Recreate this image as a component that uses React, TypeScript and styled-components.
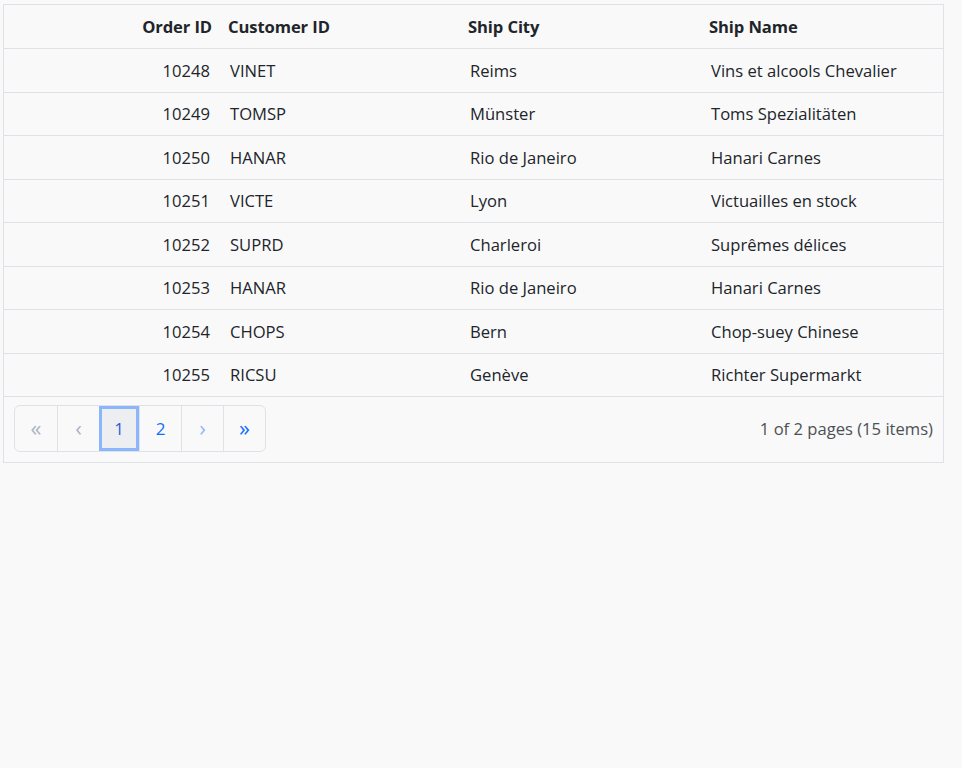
import React from "react";
import styled, { createGlobalStyle } from "styled-components";

const Global = createGlobalStyle`
  html, body { margin: 0; padding: 0; background: #f9f9fa; }
  body { font-family: "Open Sans", "Noto Sans", sans-serif; color: #212529; }
`;

const Page = styled.div`
  padding: 4px 18px 0 3px;
  min-height: 764px;
  box-sizing: border-box;
`;

const Grid = styled.div`
  border: 1px solid #dee2e6;
  width: 941px;
  box-sizing: border-box;
`;

const Table = styled.table`
  width: 100%;
  border-collapse: collapse;
  font-size: 16.6px;
  table-layout: fixed;
`;

const Col = styled.col<{ $w?: number }>`
  width: ${(p) => (p.$w ? p.$w + "px" : "auto")};
`;

const Th = styled.th<{ $align?: string }>`
  height: 43px;
  padding: 0 8px;
  text-align: ${(p) => p.$align || "left"};
  font-weight: 700;
  border-bottom: 1px solid #dee2e6;
  white-space: nowrap;
  letter-spacing: -0.1px;
`;

const Td = styled.td<{ $align?: string }>`
  height: 42.5px;
  padding: 0 10px;
  text-align: ${(p) => p.$align || "left"};
  border-bottom: 1px solid #dee2e6;
  white-space: nowrap;
`;

const Footer = styled.div`
  display: flex;
  align-items: center;
  justify-content: space-between;
  padding: 8px 10px 10px 10px;
`;

const Pager = styled.div`
  display: flex;
  border: 1px solid #dee2e6;
  border-radius: 6px;
`;

const PageBtn = styled.button<{ $state: "disabled" | "active" | "normal" | "light"; $arrow?: boolean }>`
  width: 42px;
  height: 45px;
  box-sizing: border-box;
  font-family: inherit;
  font-size: ${(p) => (p.$arrow ? "22px" : "17px")};
  line-height: 1;
  display: flex;
  align-items: center;
  justify-content: center;
  background: ${(p) => (p.$state === "active" ? "#eceef1" : "transparent")};
  border: none;
  border-left: 1px solid #dee2e6;
  padding: 0 0 3px 0;
  color: ${(p) =>
    p.$state === "disabled" ? "#aab4c3" : p.$state === "light" ? "#8fb8f7" : "#0d6efd"};
  ${(p) =>
    p.$state === "active"
      ? "outline: 3px solid #8bb6fb; outline-offset: -3px; color: #2b5fd9; border-left: none; width: 40px; padding: 0;"
      : ""}
  ${(p) => (p.$state === "normal" && !p.$arrow ? "padding: 0;" : "")}
  &:first-child { border-left: none; border-radius: 6px 0 0 6px; }
`;

const Summary = styled.div`
  font-size: 16.6px;
  color: #4d5154;
`;

const rows = [
  ["10248", "VINET", "Reims", "Vins et alcools Chevalier"],
  ["10249", "TOMSP", "Münster", "Toms Spezialitäten"],
  ["10250", "HANAR", "Rio de Janeiro", "Hanari Carnes"],
  ["10251", "VICTE", "Lyon", "Victuailles en stock"],
  ["10252", "SUPRD", "Charleroi", "Suprêmes délices"],
  ["10253", "HANAR", "Rio de Janeiro", "Hanari Carnes"],
  ["10254", "CHOPS", "Bern", "Chop-suey Chinese"],
  ["10255", "RICSU", "Genève", "Richter Supermarkt"],
];

export default function App() {
  return (
    <Page>
      <Global />
      <Grid>
        <Table>
          <colgroup>
            <Col $w={216} />
            <Col $w={240} />
            <Col $w={241} />
            <Col />
          </colgroup>
          <thead>
            <tr>
              <Th $align="right">Order ID</Th>
              <Th>Customer ID</Th>
              <Th>Ship City</Th>
              <Th>Ship Name</Th>
            </tr>
          </thead>
          <tbody>
            {rows.map((r) => (
              <tr key={r[0]}>
                <Td $align="right">{r[0]}</Td>
                <Td>{r[1]}</Td>
                <Td>{r[2]}</Td>
                <Td>{r[3]}</Td>
              </tr>
            ))}
          </tbody>
        </Table>
        <Footer>
          <Pager>
            <PageBtn $state="disabled" $arrow>«</PageBtn>
            <PageBtn $state="disabled" $arrow>‹</PageBtn>
            <PageBtn $state="active">1</PageBtn>
            <PageBtn $state="normal">2</PageBtn>
            <PageBtn $state="light" $arrow>›</PageBtn>
            <PageBtn $state="normal" $arrow>»</PageBtn>
          </Pager>
          <Summary>1 of 2 pages (15 items)</Summary>
        </Footer>
      </Grid>
    </Page>
  );
}
